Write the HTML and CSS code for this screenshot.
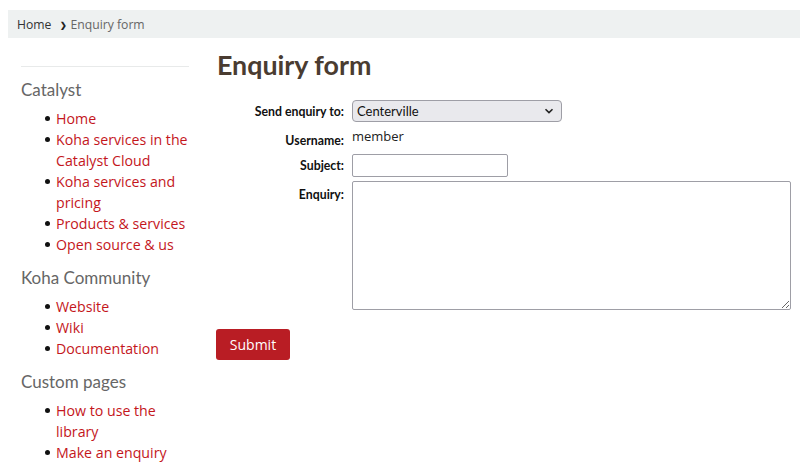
FILE: index.html
```html
<!DOCTYPE html>
<html lang="en">
<head>
<meta charset="utf-8">
<title>Enquiry form</title>
<link rel="stylesheet" href="styles.css">
</head>
<body>
<div class="page">
  <nav class="breadcrumb">
    <a class="crumb-home" href="#">Home</a>
    <span class="crumb-sep">&#x276F;</span>
    <span class="crumb-current">Enquiry form</span>
  </nav>
  <div class="layout">
    <aside class="sidebar">
      <hr class="side-rule">
      <h3 class="side-title">Catalyst</h3>
      <ul class="side-list">
        <li><a href="#">Home</a></li>
        <li><a href="#">Koha services in the Catalyst Cloud</a></li>
        <li><a href="#">Koha services and pricing</a></li>
        <li><a href="#">Products &amp; services</a></li>
        <li><a href="#">Open source &amp; us</a></li>
      </ul>
      <h3 class="side-title">Koha Community</h3>
      <ul class="side-list">
        <li><a href="#">Website</a></li>
        <li><a href="#">Wiki</a></li>
        <li><a href="#">Documentation</a></li>
      </ul>
      <h3 class="side-title">Custom pages</h3>
      <ul class="side-list">
        <li><a href="#">How to use the library</a></li>
        <li><a href="#">Make an enquiry</a></li>
      </ul>
    </aside>
    <main class="main">
      <h1 class="title">Enquiry form</h1>
      <form class="form">
        <label class="lbl">Send enquiry to:</label>
        <div class="select">
          <span>Centerville</span>
          <svg class="chev" width="10" height="6" viewBox="0 0 10 6"><path d="M1.5 1.2 L5 4.6 L8.5 1.2" fill="none" stroke="#222" stroke-width="1.6"/></svg>
        </div>
        <label class="lbl lbl-user">Username:</label>
        <div class="value">member</div>
        <label class="lbl">Subject:</label>
        <input class="subject" type="text">
        <label class="lbl lbl-top">Enquiry:</label>
        <textarea class="enquiry"></textarea>
      </form>
      <button class="submit" type="button">Submit</button>
    </main>
  </div>
</div>
</body>
</html>
```
FILE: styles.css
```css
* { box-sizing: border-box; }
html, body { margin: 0; padding: 0; background: #fff; }
body { font-family: "Open Sans", sans-serif; color: #333; }
.page { padding: 10px 0 0 8px; }

.breadcrumb {
  background: #eef1f1;
  height: 28px;
  display: flex;
  align-items: center;
  padding-left: 9px;
  font-size: 12.2px;
}
.crumb-home { color: #333; text-decoration: none; }
.crumb-sep { font-size: 8px; color: #222; margin: 0 3px 0 9px; font-weight: bold; }
.crumb-current { color: #666; }

.layout { display: flex; gap: 28px; padding-left: 13px; }
.sidebar { width: 168px; flex: none; padding-top: 28px; }
.side-rule { border: 0; border-top: 1px solid #e8eaea; margin: 0; }
.side-title {
  font-family: Lato, sans-serif;
  font-weight: normal;
  font-size: 17px;
  color: #666;
  line-height: 22px;
  margin: 12px 0 7px;
}
.sidebar .side-rule + .side-title { margin-top: 12px; }
.side-list {
  margin: 0;
  padding-left: 35px;
  font-size: 14.2px;
  line-height: 21px;
  list-style: none;
}
.side-list li::before {
  content: "";
  display: inline-block;
  width: 5px;
  height: 5px;
  border-radius: 50%;
  background: #111;
  margin: 0 6px 0 -11px;
  vertical-align: 3px;
}
.side-list a { color: #c4161c; text-decoration: none; }

.main { flex: 1; padding-right: 8px; }
.title {
  font-family: Lato, sans-serif;
  font-weight: bold;
  font-size: 26.8px;
  color: #4a3c31;
  margin: 10px 0 18px;
  line-height: 34px;
}
.form {
  display: grid;
  grid-template-columns: 127px auto;
  column-gap: 8px;
  row-gap: 4px;
  justify-items: start;
}
.lbl {
  font-family: Lato, sans-serif;
  font-weight: bold;
  font-size: 12.3px;
  color: #111;
  justify-self: end;
  align-self: center;
}
.lbl-user { padding-top: 4px; }
.lbl-top { align-self: start; padding-top: 6px; }
.select {
  width: 210px;
  height: 22px;
  border: 1px solid #9e9ea6;
  border-radius: 4px;
  background: #e9e9ed;
  font-family: Lato, sans-serif;
  font-size: 13px;
  color: #111;
  display: flex;
  align-items: center;
  justify-content: space-between;
  padding: 0 7px 0 4px;
}
.value {
  font-size: 13px;
  color: #222;
  height: 24px;
  line-height: 20px;
}
.subject {
  width: 156px;
  height: 23px;
  border: 1px solid #9e9ea6;
  border-radius: 2px;
  margin: 0;
}
.enquiry {
  width: 439px;
  height: 129px;
  border: 1px solid #9e9ea6;
  border-radius: 2px;
  margin: 0;
  resize: both;
}
.submit {
  display: block;
  margin: 19px 0 0 -1px;
  width: 74px;
  height: 31px;
  background: #b91d24;
  color: #fff;
  border: 0;
  border-radius: 3px;
  font-family: "Open Sans", sans-serif;
  font-size: 14px;
  padding: 0;
}
```
